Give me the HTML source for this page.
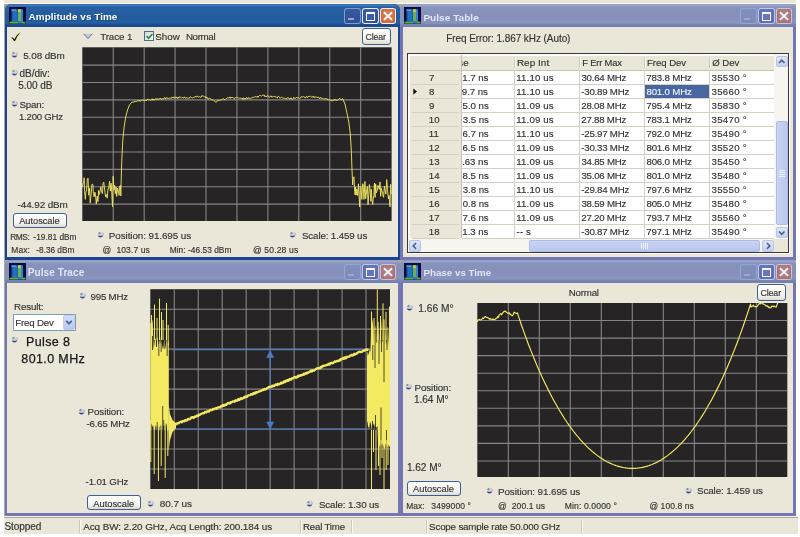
<!DOCTYPE html>
<html><head><meta charset="utf-8"><style>
html,body{margin:0;padding:0;width:800px;height:537px;overflow:hidden;background:#fff}
#w>div,#w>svg{position:absolute}
#w{position:absolute;left:0;top:0;width:800px;height:537px;filter:blur(0.4px)}
.t{white-space:pre;font-family:"Liberation Sans", sans-serif;-webkit-text-stroke:0.15px currentColor}
</style></head><body>
<div id="w">
<div style="left:0;top:0;width:800px;height:537px;background:#ffffff"></div>
<div style="left:3.5px;top:0px;width:792.5px;height:3px;background:#eae7d8"></div>
<div style="left:3.5px;top:3px;width:792.5px;height:1px;background:#fbfaf4"></div>
<div style="left:3.5px;top:3.5px;width:792.5px;height:513px;background:#a9a79c"></div>
<div style="left:4.5px;top:4px;width:395.5px;height:256px;background:#1b4592;border-radius:6px 6px 0 0"></div>
<div style="left:4.5px;top:4px;width:395.5px;height:22.5px;background:linear-gradient(#3268ae 0px,#4278bc 1.5px,#2862a6 3px,#225c9c 12px,#2460a2 19px,#1a4a8c 21px,#1a4a8c 22.5px);border-radius:6px 6px 0 0"></div>
<div style="left:7.0px;top:26.5px;width:390.5px;height:230.5px;background:#eae7d8"></div>
<svg style="left:8.5px;top:7px" width="17" height="17" viewBox="0 0 17 17">
<rect x="0" y="0" width="17" height="17" fill="#0c0c3a"/>
<rect x="2.5" y="2.3" width="11.5" height="13" fill="#1c5aa8"/>
<rect x="2.5" y="2.3" width="5" height="1.8" fill="#4a9ce0"/>
<rect x="4" y="4" width="4" height="10" fill="#2270bc"/>
<rect x="9" y="2.3" width="3" height="12" fill="#6cae5a"/>
<rect x="9.2" y="2.3" width="2.4" height="2.6" fill="#d8d848"/>
<rect x="12" y="2.3" width="2" height="13" fill="#2a84d0"/>
<rect x="0.5" y="14.6" width="8.7" height="2" fill="#5aaa48"/>
<rect x="12.3" y="14.6" width="4.2" height="2" fill="#5aaa48"/>
<rect x="9.2" y="14.6" width="3.1" height="2" fill="#2a84d0"/>
</svg>
<div class="t" style="left:28.60px;top:12.40px;font-size:9.93px;line-height:9.93px;letter-spacing:0.047px;color:#ffffff;font-weight:700;-webkit-text-stroke:0;text-shadow:1px 1px 0 rgba(10,20,80,0.35)">Amplitude vs Time</div>
<div style="left:344.25px;top:8.2px;width:16.5px;height:16.3px;background:linear-gradient(#36589e,#2d5096);border:1px solid rgba(200,210,240,0.55);box-sizing:border-box;border-radius:3px"></div>
<div style="left:348.25px;top:18.2px;width:5.8px;height:2px;background:#a49ec2"></div>
<div style="left:362.25px;top:8.2px;width:16.5px;height:16.3px;background:radial-gradient(ellipse at 50% 40%,#3c5eaa 40%,#284a96 100%);border:1.2px solid rgba(255,255,255,0.9);box-sizing:border-box;border-radius:3px"></div>
<div style="left:366.0px;top:12.0px;width:9px;height:9px;border:1.2px solid #ffffff;border-top-width:2.3px;box-sizing:border-box"></div>
<div style="left:380.25px;top:8.2px;width:16.2px;height:16.2px;background:radial-gradient(ellipse at 50% 45%,#dc7c52 30%,#c85e32 100%);border:1.2px solid rgba(255,255,255,0.9);box-sizing:border-box;border-radius:3px"></div>
<svg style="left:380.25px;top:8.2px" width="16.2" height="16.2"><path d="M3.9 4.2 L12.1 11.9 M12.1 4.2 L3.9 11.9" stroke="#ffffff" stroke-width="1.9"/></svg>
<div style="left:400px;top:4px;width:396px;height:256px;background:#7276b2;border-radius:6px 6px 0 0"></div>
<div style="left:400px;top:4px;width:396px;height:22.5px;background:linear-gradient(#8e9ac4 0px,#9aa6cc 1.5px,#8894bc 3px,#8490b9 12px,#8894bc 19px,#7480b0 21px,#7480b0 22.5px);border-radius:6px 6px 0 0"></div>
<div style="left:403px;top:26.5px;width:390px;height:230.5px;background:#eae7d8"></div>
<svg style="left:404px;top:7px" width="17" height="17" viewBox="0 0 17 17">
<rect x="0" y="0" width="17" height="17" fill="#0c0c3a"/>
<rect x="2.5" y="2.3" width="11.5" height="13" fill="#1c5aa8"/>
<rect x="2.5" y="2.3" width="5" height="1.8" fill="#4a9ce0"/>
<rect x="4" y="4" width="4" height="10" fill="#2270bc"/>
<rect x="9" y="2.3" width="3" height="12" fill="#6cae5a"/>
<rect x="9.2" y="2.3" width="2.4" height="2.6" fill="#d8d848"/>
<rect x="12" y="2.3" width="2" height="13" fill="#2a84d0"/>
<rect x="0.5" y="14.6" width="8.7" height="2" fill="#5aaa48"/>
<rect x="12.3" y="14.6" width="4.2" height="2" fill="#5aaa48"/>
<rect x="9.2" y="14.6" width="3.1" height="2" fill="#2a84d0"/>
</svg>
<div class="t" style="left:423.40px;top:12.50px;font-size:9.98px;line-height:9.98px;letter-spacing:0.064px;color:#dfe6fa;font-weight:700;-webkit-text-stroke:0;">Pulse Table</div>
<div style="left:740.25px;top:8.2px;width:16.5px;height:16.3px;background:linear-gradient(#8290bc,#7c8ab8);border:1px solid rgba(200,208,240,0.35);box-sizing:border-box;border-radius:3px"></div>
<div style="left:744.25px;top:18.2px;width:5.8px;height:2px;background:#9ca6d0"></div>
<div style="left:758.25px;top:8.2px;width:16.5px;height:16.3px;background:radial-gradient(ellipse at 50% 40%,#6676b8 40%,#5666aa 100%);border:1.2px solid rgba(225,230,250,0.75);box-sizing:border-box;border-radius:3px"></div>
<div style="left:762.0px;top:12.0px;width:9px;height:9px;border:1.2px solid #f2f4ff;border-top-width:2.3px;box-sizing:border-box"></div>
<div style="left:776.25px;top:8.2px;width:16.2px;height:16.2px;background:radial-gradient(ellipse at 50% 45%,#b48084 30%,#a06c72 100%);border:1.2px solid rgba(225,230,250,0.7);box-sizing:border-box;border-radius:3px"></div>
<svg style="left:776.25px;top:8.2px" width="16.2" height="16.2"><path d="M3.9 4.2 L12.1 11.9 M12.1 4.2 L3.9 11.9" stroke="#f2f4ff" stroke-width="1.9"/></svg>
<div style="left:4.5px;top:260px;width:395.5px;height:256px;background:#7276b2;border-radius:6px 6px 0 0"></div>
<div style="left:4.5px;top:260px;width:395.5px;height:22.5px;background:linear-gradient(#8e9ac4 0px,#9aa6cc 1.5px,#8894bc 3px,#8490b9 12px,#8894bc 19px,#7480b0 21px,#7480b0 22.5px);border-radius:6px 6px 0 0"></div>
<div style="left:7.0px;top:282.5px;width:390.5px;height:230.0px;background:#eae7d8"></div>
<svg style="left:8.5px;top:263px" width="17" height="17" viewBox="0 0 17 17">
<rect x="0" y="0" width="17" height="17" fill="#0c0c3a"/>
<rect x="2.5" y="2.3" width="11.5" height="13" fill="#1c5aa8"/>
<rect x="2.5" y="2.3" width="5" height="1.8" fill="#4a9ce0"/>
<rect x="4" y="4" width="4" height="10" fill="#2270bc"/>
<rect x="9" y="2.3" width="3" height="12" fill="#6cae5a"/>
<rect x="9.2" y="2.3" width="2.4" height="2.6" fill="#d8d848"/>
<rect x="12" y="2.3" width="2" height="13" fill="#2a84d0"/>
<rect x="0.5" y="14.6" width="8.7" height="2" fill="#5aaa48"/>
<rect x="12.3" y="14.6" width="4.2" height="2" fill="#5aaa48"/>
<rect x="9.2" y="14.6" width="3.1" height="2" fill="#2a84d0"/>
</svg>
<div class="t" style="left:27.80px;top:267.70px;font-size:10.01px;line-height:10.01px;letter-spacing:0.082px;color:#dfe6fa;font-weight:700;-webkit-text-stroke:0;">Pulse Trace</div>
<div style="left:344.25px;top:264.2px;width:16.5px;height:16.3px;background:linear-gradient(#8290bc,#7c8ab8);border:1px solid rgba(200,208,240,0.35);box-sizing:border-box;border-radius:3px"></div>
<div style="left:348.25px;top:274.2px;width:5.8px;height:2px;background:#9ca6d0"></div>
<div style="left:362.25px;top:264.2px;width:16.5px;height:16.3px;background:radial-gradient(ellipse at 50% 40%,#6676b8 40%,#5666aa 100%);border:1.2px solid rgba(225,230,250,0.75);box-sizing:border-box;border-radius:3px"></div>
<div style="left:366.0px;top:268.0px;width:9px;height:9px;border:1.2px solid #f2f4ff;border-top-width:2.3px;box-sizing:border-box"></div>
<div style="left:380.25px;top:264.2px;width:16.2px;height:16.2px;background:radial-gradient(ellipse at 50% 45%,#b48084 30%,#a06c72 100%);border:1.2px solid rgba(225,230,250,0.7);box-sizing:border-box;border-radius:3px"></div>
<svg style="left:380.25px;top:264.2px" width="16.2" height="16.2"><path d="M3.9 4.2 L12.1 11.9 M12.1 4.2 L3.9 11.9" stroke="#f2f4ff" stroke-width="1.9"/></svg>
<div style="left:400px;top:260px;width:396px;height:256px;background:#7276b2;border-radius:6px 6px 0 0"></div>
<div style="left:400px;top:260px;width:396px;height:22.5px;background:linear-gradient(#8e9ac4 0px,#9aa6cc 1.5px,#8894bc 3px,#8490b9 12px,#8894bc 19px,#7480b0 21px,#7480b0 22.5px);border-radius:6px 6px 0 0"></div>
<div style="left:403px;top:282.5px;width:390px;height:230.0px;background:#eae7d8"></div>
<svg style="left:404px;top:263px" width="17" height="17" viewBox="0 0 17 17">
<rect x="0" y="0" width="17" height="17" fill="#0c0c3a"/>
<rect x="2.5" y="2.3" width="11.5" height="13" fill="#1c5aa8"/>
<rect x="2.5" y="2.3" width="5" height="1.8" fill="#4a9ce0"/>
<rect x="4" y="4" width="4" height="10" fill="#2270bc"/>
<rect x="9" y="2.3" width="3" height="12" fill="#6cae5a"/>
<rect x="9.2" y="2.3" width="2.4" height="2.6" fill="#d8d848"/>
<rect x="12" y="2.3" width="2" height="13" fill="#2a84d0"/>
<rect x="0.5" y="14.6" width="8.7" height="2" fill="#5aaa48"/>
<rect x="12.3" y="14.6" width="4.2" height="2" fill="#5aaa48"/>
<rect x="9.2" y="14.6" width="3.1" height="2" fill="#2a84d0"/>
</svg>
<div class="t" style="left:423.41px;top:268.00px;font-size:9.79px;line-height:9.79px;color:#dfe6fa;font-weight:700;-webkit-text-stroke:0;">Phase vs Time</div>
<div style="left:740.25px;top:264.2px;width:16.5px;height:16.3px;background:linear-gradient(#8290bc,#7c8ab8);border:1px solid rgba(200,208,240,0.35);box-sizing:border-box;border-radius:3px"></div>
<div style="left:744.25px;top:274.2px;width:5.8px;height:2px;background:#9ca6d0"></div>
<div style="left:758.25px;top:264.2px;width:16.5px;height:16.3px;background:radial-gradient(ellipse at 50% 40%,#6676b8 40%,#5666aa 100%);border:1.2px solid rgba(225,230,250,0.75);box-sizing:border-box;border-radius:3px"></div>
<div style="left:762.0px;top:268.0px;width:9px;height:9px;border:1.2px solid #f2f4ff;border-top-width:2.3px;box-sizing:border-box"></div>
<div style="left:776.25px;top:264.2px;width:16.2px;height:16.2px;background:radial-gradient(ellipse at 50% 45%,#b48084 30%,#a06c72 100%);border:1.2px solid rgba(225,230,250,0.7);box-sizing:border-box;border-radius:3px"></div>
<svg style="left:776.25px;top:264.2px" width="16.2" height="16.2"><path d="M3.9 4.2 L12.1 11.9 M12.1 4.2 L3.9 11.9" stroke="#f2f4ff" stroke-width="1.9"/></svg>
<svg style="left:10px;top:31px" width="13" height="12"><path d="M1.3 6.4 Q2.6 5.6 4.3 8.2 Q6.6 3.2 10.6 0.9 Q7.6 3.8 5.0 9.9 L4.0 10.0 Q2.8 7.6 1.3 6.4Z" fill="#e8dc30" transform="translate(0.7,0.4)"/><path d="M1.3 6.4 Q2.6 5.6 4.3 8.2 Q6.6 3.2 10.6 0.9 Q7.6 3.8 5.0 9.9 L4.0 10.0 Q2.8 7.6 1.3 6.4Z" fill="#161616"/></svg>
<svg style="left:10.90px;top:51.10px" width="7" height="7" viewBox="0 0 7 7"><circle cx="3.5" cy="3.5" r="2.9" fill="#d6d6e6"/><path d="M0.75 4.4 Q3.5 5.0 6.25 4.4 A2.9 2.9 0 0 1 0.75 4.4Z" fill="#4c3e94"/><path d="M5.6 1.6 A2.9 2.9 0 0 1 6.2 4.3" stroke="#9a9ab4" stroke-width="0.7" fill="none"/><circle cx="2.5" cy="2.3" r="1.05" fill="#3a8a44"/><circle cx="2.9" cy="2.6" r="0.55" fill="#c8d040"/></svg>
<div class="t" style="left:23.20px;top:50.70px;font-size:9.92px;line-height:9.92px;letter-spacing:-0.105px;color:#333333;font-weight:400;">5.08 dBm</div>
<svg style="left:10.90px;top:69.20px" width="7" height="7" viewBox="0 0 7 7"><circle cx="3.5" cy="3.5" r="2.9" fill="#d6d6e6"/><path d="M0.75 4.4 Q3.5 5.0 6.25 4.4 A2.9 2.9 0 0 1 0.75 4.4Z" fill="#4c3e94"/><path d="M5.6 1.6 A2.9 2.9 0 0 1 6.2 4.3" stroke="#9a9ab4" stroke-width="0.7" fill="none"/><circle cx="2.5" cy="2.3" r="1.05" fill="#3a8a44"/><circle cx="2.9" cy="2.6" r="0.55" fill="#c8d040"/></svg>
<div class="t" style="left:19.50px;top:69.00px;font-size:10.04px;line-height:10.04px;letter-spacing:-0.052px;color:#333333;font-weight:400;">dB/div:</div>
<div class="t" style="left:18.30px;top:81.40px;font-size:10.02px;line-height:10.02px;letter-spacing:-0.062px;color:#333333;font-weight:400;">5.00 dB</div>
<svg style="left:10.90px;top:100.40px" width="7" height="7" viewBox="0 0 7 7"><circle cx="3.5" cy="3.5" r="2.9" fill="#d6d6e6"/><path d="M0.75 4.4 Q3.5 5.0 6.25 4.4 A2.9 2.9 0 0 1 0.75 4.4Z" fill="#4c3e94"/><path d="M5.6 1.6 A2.9 2.9 0 0 1 6.2 4.3" stroke="#9a9ab4" stroke-width="0.7" fill="none"/><circle cx="2.5" cy="2.3" r="1.05" fill="#3a8a44"/><circle cx="2.9" cy="2.6" r="0.55" fill="#c8d040"/></svg>
<div class="t" style="left:19.51px;top:100.30px;font-size:9.77px;line-height:9.77px;letter-spacing:-0.171px;color:#333333;font-weight:400;">Span:</div>
<div class="t" style="left:18.93px;top:112.30px;font-size:9.62px;line-height:9.62px;letter-spacing:-0.216px;color:#333333;font-weight:400;">1.200 GHz</div>
<div class="t" style="left:17.60px;top:199.70px;font-size:9.92px;line-height:9.92px;letter-spacing:-0.107px;color:#333333;font-weight:400;">-44.92 dBm</div>
<div style="left:13px;top:212.8px;width:54px;height:15px;border:1px solid #3c5f94;border-radius:3px;box-sizing:border-box;background:linear-gradient(#ffffff,#f4f3ee 70%,#dcdad0)"></div>
<div class="t" style="left:19.20px;top:216.90px;font-size:9.26px;line-height:9.26px;letter-spacing:-0.016px;color:#333333;font-weight:400;">Autoscale</div>
<div class="t" style="left:10.13px;top:232.80px;font-size:8.40px;line-height:8.40px;letter-spacing:-0.397px;color:#333333;font-weight:400;">RMS:</div>
<div class="t" style="left:33.37px;top:232.80px;font-size:8.34px;line-height:8.34px;letter-spacing:0.016px;color:#333333;font-weight:400;">-19.81 dBm</div>
<div class="t" style="left:11.32px;top:246.30px;font-size:8.48px;line-height:8.48px;letter-spacing:0.082px;color:#333333;font-weight:400;">Max:</div>
<div class="t" style="left:36.37px;top:247.30px;font-size:8.26px;line-height:8.26px;letter-spacing:-0.019px;color:#333333;font-weight:400;">-8.36 dBm</div>
<svg style="left:83px;top:33px" width="10" height="7"><path d="M0.6 0.8 L9.2 0.8 L5 5.6Z" fill="#c4c8de"/><path d="M0.6 0.8 L5 5.6 L9.2 0.8" stroke="#6e74ac" stroke-width="1" fill="none"/></svg>
<div class="t" style="left:100.20px;top:32.20px;font-size:9.80px;line-height:9.80px;letter-spacing:-0.102px;color:#333333;font-weight:400;">Trace 1</div>
<div style="left:144px;top:30.5px;width:10.3px;height:10.3px;border:1px solid #4a6a98;box-sizing:border-box;background:linear-gradient(135deg,#dcdcd4,#f8f8f4)"></div>
<svg style="left:145px;top:32px" width="9" height="9"><path d="M1.6 4.0 L3.6 6.2 L7.4 2.0" stroke="#2a8c3a" stroke-width="1.7" fill="none"/></svg>
<div class="t" style="left:155.21px;top:32.20px;font-size:9.80px;line-height:9.80px;letter-spacing:0.067px;color:#333333;font-weight:400;">Show</div>
<div class="t" style="left:185.92px;top:32.20px;font-size:9.80px;line-height:9.80px;letter-spacing:-0.378px;color:#333333;font-weight:400;">Normal</div>
<div style="left:361.75px;top:28.4px;width:29.25px;height:16.5px;border:1px solid #3c5f94;border-radius:3px;box-sizing:border-box;background:linear-gradient(#ffffff,#f4f3ee 70%,#dcdad0)"></div>
<div class="t" style="left:365.46px;top:33.40px;font-size:8.84px;line-height:8.84px;letter-spacing:-0.167px;color:#333333;font-weight:400;">Clear</div>
<svg style="left:82px;top:47px" width="310" height="174" viewBox="0 0 310 174"><rect x="0.30" y="0.30" width="309.30" height="173.70" fill="#272425"/><path d="M31.23 0.30V174.00 M0.30 18.17H309.60 M62.16 0.30V174.00 M0.30 35.54H309.60 M93.09 0.30V174.00 M0.30 52.91H309.60 M124.02 0.30V174.00 M0.30 70.28H309.60 M154.95 0.30V174.00 M0.30 87.65H309.60 M185.88 0.30V174.00 M0.30 105.02H309.60 M216.81 0.30V174.00 M0.30 122.39H309.60 M247.74 0.30V174.00 M0.30 139.76H309.60 M278.67 0.30V174.00 M0.30 157.13H309.60" stroke="#858585" stroke-width="1.1" fill="none"/><path d="M0.30 140.51 L1.08 136.23 L1.71 135.99 L2.15 130.78 L2.60 144.61 L3.38 152.38 L3.92 144.46 L4.58 144.19 L5.31 132.15 L6.04 131.20 L6.75 148.21 L7.69 141.15 L8.21 156.02 L9.12 147.40 L10.09 137.01 L10.93 137.58 L11.38 146.36 L12.12 149.88 L12.93 145.10 L13.60 149.28 L14.29 156.95 L15.26 148.97 L15.90 154.72 L16.66 143.39 L17.24 147.55 L18.18 143.44 L18.82 139.72 L19.48 144.35 L20.45 146.61 L21.00 136.41 L21.79 135.21 L22.31 139.79 L23.03 145.37 L23.52 149.61 L24.31 147.58 L25.22 151.18 L25.95 141.77 L26.64 141.81 L27.61 134.22 L28.35 144.12 L29.11 136.20 L29.74 145.78 L30.50 159.60 L31.18 129.26 L32.02 143.14 L32.73 138.49 L33.35 146.73 L34.19 140.07 L34.66 149.37 L35.59 141.05 L36.32 143.55 L37.08 148.40 L37.61 139.07 L38.48 138.40 L38.80 149.00 L39.20 133.00 L39.80 113.00 L40.80 93.00 L42.00 81.00 L43.50 71.00 L45.50 63.00 L47.50 58.00 L49.50 55.50 L53.00 54.50 L58.00 53.50 L58.00 54.38 L58.71 53.99 L59.43 53.39 L60.14 52.86 L60.86 53.57 L61.57 53.08 L62.29 53.88 L63.00 53.70 L63.71 52.96 L64.43 54.01 L65.14 52.33 L65.86 52.30 L66.57 52.89 L67.29 52.58 L68.00 52.77 L68.71 53.60 L69.43 52.86 L70.14 51.69 L70.86 53.25 L71.57 52.16 L72.29 52.63 L73.00 52.90 L73.71 51.54 L74.43 51.96 L75.14 52.47 L75.86 51.47 L76.57 52.64 L77.29 51.75 L78.00 52.04 L78.70 51.00 L79.39 52.49 L80.09 52.03 L80.78 51.51 L81.48 51.95 L82.17 50.71 L82.87 50.79 L83.56 52.23 L84.26 50.44 L84.95 51.39 L85.65 51.11 L86.34 51.39 L87.04 51.26 L87.73 51.17 L88.43 50.90 L89.12 51.67 L89.82 50.21 L90.51 50.86 L91.21 49.85 L91.90 51.20 L92.60 51.01 L93.30 49.88 L94.00 51.05 L94.70 49.95 L95.40 51.48 L96.10 50.05 L96.80 51.27 L97.50 49.75 L98.20 50.08 L98.90 50.60 L99.60 51.07 L100.30 50.29 L101.00 50.68 L101.70 51.20 L102.40 49.81 L103.10 51.03 L103.80 51.32 L104.50 50.89 L105.20 51.17 L105.90 50.63 L106.60 51.19 L107.30 51.28 L108.00 49.94 L108.69 49.91 L109.38 50.50 L110.07 51.09 L110.76 50.85 L111.44 50.49 L112.13 50.73 L112.82 49.54 L113.51 49.47 L114.20 50.26 L114.89 49.31 L115.58 49.14 L116.27 50.19 L116.96 49.86 L117.64 49.71 L118.33 50.18 L119.02 50.31 L119.71 48.76 L120.40 48.94 L121.13 48.90 L121.87 49.22 L122.60 50.08 L123.33 49.54 L124.07 51.32 L124.80 50.05 L125.53 50.74 L126.27 52.13 L127.00 51.69 L127.70 51.24 L128.40 51.66 L129.10 52.35 L129.80 53.17 L130.50 52.91 L131.20 52.73 L131.90 53.50 L132.60 54.42 L133.30 54.79 L134.00 55.06 L134.70 54.83 L135.40 53.40 L136.10 53.67 L136.80 53.43 L137.50 53.21 L138.20 52.89 L138.90 53.35 L139.60 52.73 L140.30 52.16 L141.00 52.15 L141.70 51.63 L142.40 52.62 L143.10 52.72 L143.80 52.00 L144.50 51.31 L145.20 50.92 L145.90 50.52 L146.60 50.92 L147.30 51.23 L148.00 49.87 L148.71 51.34 L149.43 50.09 L150.14 51.04 L150.86 50.29 L151.57 51.21 L152.29 51.78 L153.00 50.76 L153.71 50.84 L154.43 50.77 L155.14 50.34 L155.86 50.88 L156.57 50.88 L157.29 51.14 L158.00 51.63 L158.71 51.11 L159.43 51.39 L160.14 51.04 L160.86 52.29 L161.57 50.81 L162.29 52.31 L163.00 51.11 L163.69 52.17 L164.38 50.64 L165.07 50.87 L165.75 51.90 L166.44 50.49 L167.13 51.41 L167.82 51.42 L168.51 51.37 L169.20 50.95 L169.88 51.33 L170.57 50.25 L171.26 50.37 L171.95 50.23 L172.64 50.08 L173.33 49.67 L174.02 49.48 L174.70 50.31 L175.39 49.09 L176.08 50.27 L176.77 49.03 L177.46 48.47 L178.15 48.49 L178.83 48.69 L179.52 49.21 L180.21 48.41 L180.90 48.38 L181.59 48.17 L182.28 48.03 L182.97 49.86 L183.66 48.87 L184.34 49.83 L185.03 49.35 L185.72 48.37 L186.41 49.62 L187.10 50.09 L187.79 50.20 L188.48 48.98 L189.17 48.89 L189.86 50.30 L190.54 49.81 L191.23 49.69 L191.92 49.16 L192.61 49.65 L193.30 50.11 L193.99 49.48 L194.67 50.53 L195.36 50.96 L196.04 49.33 L196.73 49.38 L197.41 50.35 L198.10 51.29 L198.78 50.55 L199.47 50.15 L200.15 50.60 L200.83 51.07 L201.52 51.15 L202.20 51.25 L202.89 51.14 L203.57 51.85 L204.26 52.09 L204.94 50.98 L205.63 50.91 L206.31 51.02 L207.00 51.06 L207.69 52.22 L208.38 51.89 L209.06 50.76 L209.75 52.23 L210.44 52.15 L211.12 51.83 L211.81 50.29 L212.50 51.33 L213.19 51.72 L213.88 50.85 L214.56 50.11 L215.25 51.15 L215.94 50.57 L216.62 50.74 L217.31 51.51 L218.00 50.78 L218.68 50.90 L219.36 49.69 L220.05 49.89 L220.73 50.00 L221.41 49.47 L222.09 50.07 L222.78 49.96 L223.46 51.10 L224.14 49.86 L224.82 49.29 L225.51 50.77 L226.19 49.53 L226.87 49.42 L227.55 49.64 L228.24 49.15 L228.92 49.45 L229.60 50.08 L230.29 49.43 L230.99 50.46 L231.68 49.30 L232.37 50.69 L233.07 49.56 L233.76 50.44 L234.45 50.17 L235.15 50.08 L235.84 50.75 L236.53 49.85 L237.23 51.50 L237.92 51.40 L238.61 50.22 L239.31 51.63 L240.00 51.51 L240.71 51.34 L241.41 51.80 L242.12 51.89 L242.83 51.65 L243.54 51.43 L244.24 52.20 L244.95 51.51 L245.66 52.90 L246.36 52.87 L247.07 52.67 L247.78 52.68 L248.49 53.33 L249.19 53.15 L249.90 54.04 L250.62 53.66 L251.34 53.24 L252.06 53.58 L252.78 52.06 L253.50 53.17 L254.22 53.28 L254.94 53.03 L255.66 53.37 L256.38 52.72 L257.10 51.62 L257.82 51.45 L258.54 52.43 L259.26 52.91 L259.98 51.77 L260.70 51.90 L263.00 57.00 L264.80 65.40 L266.80 75.00 L268.30 87.00 L269.30 103.00 L270.00 123.00 L270.70 138.00 L271.20 130.71 L272.00 129.78 L272.70 144.60 L273.16 148.03 L273.62 140.01 L274.16 148.08 L274.85 142.00 L275.66 148.54 L276.44 136.82 L277.00 148.13 L277.74 159.94 L278.21 139.20 L279.03 140.35 L279.88 152.39 L280.47 136.96 L281.06 136.80 L282.03 152.40 L282.97 134.42 L283.68 151.70 L284.56 144.15 L285.37 139.43 L286.06 157.71 L286.71 147.86 L287.34 137.56 L287.94 141.25 L288.89 154.44 L289.35 142.13 L289.81 151.23 L290.71 157.36 L291.21 152.01 L291.81 148.64 L292.47 135.99 L293.11 150.39 L293.65 136.87 L294.30 145.95 L295.20 143.75 L295.93 138.40 L296.51 139.85 L297.29 142.41 L297.98 134.92 L298.68 149.30 L299.36 141.16 L300.02 144.81 L300.54 144.95 L301.16 149.26 L301.59 150.30 L302.43 139.07 L303.27 143.97 L303.89 147.17 L304.76 132.56 L305.54 142.84 L306.41 151.96 L307.07 148.48 L308.03 159.94 L308.59 137.35 L309.31 147.10" stroke="#f4ea62" stroke-width="0.9" fill="none" stroke-linejoin="round" /></svg>
<svg style="left:97.00px;top:231.00px" width="7" height="7" viewBox="0 0 7 7"><circle cx="3.5" cy="3.5" r="2.9" fill="#d6d6e6"/><path d="M0.75 4.4 Q3.5 5.0 6.25 4.4 A2.9 2.9 0 0 1 0.75 4.4Z" fill="#4c3e94"/><path d="M5.6 1.6 A2.9 2.9 0 0 1 6.2 4.3" stroke="#9a9ab4" stroke-width="0.7" fill="none"/><circle cx="2.5" cy="2.3" r="1.05" fill="#3a8a44"/><circle cx="2.9" cy="2.6" r="0.55" fill="#c8d040"/></svg>
<div class="t" style="left:108.81px;top:230.60px;font-size:9.89px;line-height:9.89px;letter-spacing:-0.091px;color:#333333;font-weight:400;">Position: 91.695 us</div>
<svg style="left:289.40px;top:231.00px" width="7" height="7" viewBox="0 0 7 7"><circle cx="3.5" cy="3.5" r="2.9" fill="#d6d6e6"/><path d="M0.75 4.4 Q3.5 5.0 6.25 4.4 A2.9 2.9 0 0 1 0.75 4.4Z" fill="#4c3e94"/><path d="M5.6 1.6 A2.9 2.9 0 0 1 6.2 4.3" stroke="#9a9ab4" stroke-width="0.7" fill="none"/><circle cx="2.5" cy="2.3" r="1.05" fill="#3a8a44"/><circle cx="2.9" cy="2.6" r="0.55" fill="#c8d040"/></svg>
<div class="t" style="left:302.01px;top:230.60px;font-size:9.75px;line-height:9.75px;letter-spacing:-0.138px;color:#333333;font-weight:400;">Scale: 1.459 us</div>
<div class="t" style="left:102.40px;top:246.00px;font-size:8.60px;line-height:8.60px;color:#333333;font-weight:400;">@</div>
<div class="t" style="left:116.40px;top:246.00px;font-size:8.55px;line-height:8.55px;letter-spacing:0.093px;color:#333333;font-weight:400;">103.7 us</div>
<div class="t" style="left:169.73px;top:246.00px;font-size:8.37px;line-height:8.37px;letter-spacing:0.028px;color:#333333;font-weight:400;">Min: -46.53 dBm</div>
<div class="t" style="left:253.00px;top:246.00px;font-size:8.61px;line-height:8.61px;letter-spacing:0.122px;color:#333333;font-weight:400;">@ 50.28 us</div>
<div class="t" style="left:446.20px;top:34.00px;font-size:9.99px;line-height:9.99px;letter-spacing:-0.063px;color:#333333;font-weight:400;">Freq Error: 1.867 kHz (Auto)</div>
<div style="left:407px;top:53px;width:382px;height:200px;background:#ffffff;border:1.5px solid #383838;box-sizing:border-box;box-shadow:1px 1px 0 #ffffff"></div>
<div style="left:408.5px;top:54.5px;width:365.5px;height:15.5px;background:#eae7d8"></div>
<div style="left:408.5px;top:54.5px;width:365.5px;height:1px;background:#fbfaf4"></div>
<div style="left:408.5px;top:69.5px;width:365.5px;height:1px;background:#c8c4b2"></div>
<div style="left:408.5px;top:70.5px;width:53.5px;height:167.5px;background:#eae7d8"></div>
<div style="left:408.5px;top:54.5px;width:1px;height:183.5px;background:#fbfaf4"></div>
<div class="t" style="left:458.31px;top:57.70px;font-size:9.70px;line-height:9.70px;color:#333333;font-weight:400;">se</div>
<div style="left:450px;top:56px;width:11.3px;height:13px;background:#eae7d8"></div>
<div style="left:460.8px;top:54.5px;width:1.5px;height:183.5px;background:#c4c0b0"></div>
<div style="left:514px;top:70px;width:1px;height:168px;background:#d4d0c4"></div>
<div style="left:513.5px;top:56.5px;width:1px;height:11.5px;background:#d0ccbc"></div>
<div style="left:514.5px;top:56.5px;width:1px;height:11.5px;background:#fbfaf4"></div>
<div style="left:579px;top:70px;width:1px;height:168px;background:#d4d0c4"></div>
<div style="left:578.5px;top:56.5px;width:1px;height:11.5px;background:#d0ccbc"></div>
<div style="left:579.5px;top:56.5px;width:1px;height:11.5px;background:#fbfaf4"></div>
<div style="left:644px;top:70px;width:1px;height:168px;background:#d4d0c4"></div>
<div style="left:643.5px;top:56.5px;width:1px;height:11.5px;background:#d0ccbc"></div>
<div style="left:644.5px;top:56.5px;width:1px;height:11.5px;background:#fbfaf4"></div>
<div style="left:709px;top:70px;width:1px;height:168px;background:#d4d0c4"></div>
<div style="left:708.5px;top:56.5px;width:1px;height:11.5px;background:#d0ccbc"></div>
<div style="left:709.5px;top:56.5px;width:1px;height:11.5px;background:#fbfaf4"></div>
<div style="left:462px;top:83.5px;width:312px;height:1px;background:#d4d0c4"></div>
<div style="left:412px;top:83.5px;width:46.5px;height:1px;background:#d4d0c2"></div>
<div style="left:462px;top:97.5px;width:312px;height:1px;background:#d4d0c4"></div>
<div style="left:412px;top:97.5px;width:46.5px;height:1px;background:#d4d0c2"></div>
<div style="left:462px;top:111.5px;width:312px;height:1px;background:#d4d0c4"></div>
<div style="left:412px;top:111.5px;width:46.5px;height:1px;background:#d4d0c2"></div>
<div style="left:462px;top:125.5px;width:312px;height:1px;background:#d4d0c4"></div>
<div style="left:412px;top:125.5px;width:46.5px;height:1px;background:#d4d0c2"></div>
<div style="left:462px;top:139.5px;width:312px;height:1px;background:#d4d0c4"></div>
<div style="left:412px;top:139.5px;width:46.5px;height:1px;background:#d4d0c2"></div>
<div style="left:462px;top:153.5px;width:312px;height:1px;background:#d4d0c4"></div>
<div style="left:412px;top:153.5px;width:46.5px;height:1px;background:#d4d0c2"></div>
<div style="left:462px;top:167.5px;width:312px;height:1px;background:#d4d0c4"></div>
<div style="left:412px;top:167.5px;width:46.5px;height:1px;background:#d4d0c2"></div>
<div style="left:462px;top:181.5px;width:312px;height:1px;background:#d4d0c4"></div>
<div style="left:412px;top:181.5px;width:46.5px;height:1px;background:#d4d0c2"></div>
<div style="left:462px;top:195.5px;width:312px;height:1px;background:#d4d0c4"></div>
<div style="left:412px;top:195.5px;width:46.5px;height:1px;background:#d4d0c2"></div>
<div style="left:462px;top:209.5px;width:312px;height:1px;background:#d4d0c4"></div>
<div style="left:412px;top:209.5px;width:46.5px;height:1px;background:#d4d0c2"></div>
<div style="left:462px;top:223.5px;width:312px;height:1px;background:#d4d0c4"></div>
<div style="left:412px;top:223.5px;width:46.5px;height:1px;background:#d4d0c2"></div>
<div style="left:462px;top:237.5px;width:312px;height:1px;background:#d4d0c4"></div>
<div style="left:412px;top:237.5px;width:46.5px;height:1px;background:#d4d0c2"></div>
<div style="left:644.5px;top:84.5px;width:64.5px;height:13.5px;background:#4866a0"></div>
<div class="t" style="left:516.91px;top:57.70px;font-size:9.89px;line-height:9.89px;letter-spacing:0.064px;color:#333333;font-weight:400;">Rep Int</div>
<div class="t" style="left:582.15px;top:58.70px;font-size:9.32px;line-height:9.32px;letter-spacing:-0.133px;color:#333333;font-weight:400;">F Err Max</div>
<div class="t" style="left:646.93px;top:57.70px;font-size:9.61px;line-height:9.61px;letter-spacing:-0.036px;color:#333333;font-weight:400;">Freq Dev</div>
<div class="t" style="left:712.31px;top:57.70px;font-size:9.61px;line-height:9.61px;letter-spacing:-0.037px;color:#333333;font-weight:400;">Ø Dev</div>
<div class="t" style="left:429.01px;top:73.00px;font-size:9.70px;line-height:9.70px;color:#333333;font-weight:400;">7</div>
<div class="t" style="left:462.32px;top:73.00px;font-size:9.70px;line-height:9.70px;letter-spacing:-0.051px;color:#333333;font-weight:400;">1.7 ns</div>
<div class="t" style="left:516.32px;top:73.00px;font-size:9.70px;line-height:9.70px;letter-spacing:0.111px;color:#333333;font-weight:400;">11.10 us</div>
<div class="t" style="left:581.41px;top:73.00px;font-size:9.70px;line-height:9.70px;letter-spacing:-0.228px;color:#333333;font-weight:400;">30.64 MHz</div>
<div class="t" style="left:646.31px;top:73.00px;font-size:9.70px;line-height:9.70px;letter-spacing:-0.166px;color:#333333;font-weight:400;">783.8 MHz</div>
<div class="t" style="left:711.51px;top:73.00px;font-size:9.70px;line-height:9.70px;letter-spacing:0.271px;color:#333333;font-weight:400;">35530 °</div>
<div class="t" style="left:429.11px;top:86.97px;font-size:9.70px;line-height:9.70px;color:#333333;font-weight:400;">8</div>
<div class="t" style="left:461.81px;top:86.97px;font-size:9.70px;line-height:9.70px;letter-spacing:-0.051px;color:#333333;font-weight:400;">9.7 ns</div>
<div class="t" style="left:516.32px;top:86.97px;font-size:9.70px;line-height:9.70px;letter-spacing:0.111px;color:#333333;font-weight:400;">11.10 us</div>
<div class="t" style="left:581.31px;top:86.97px;font-size:9.70px;line-height:9.70px;letter-spacing:-0.228px;color:#333333;font-weight:400;">-30.89 MHz</div>
<div class="t" style="left:646.41px;top:86.97px;font-size:9.70px;line-height:9.70px;letter-spacing:-0.166px;color:#f0f4ff;font-weight:400;">801.0 MHz</div>
<div class="t" style="left:711.51px;top:86.97px;font-size:9.70px;line-height:9.70px;letter-spacing:0.271px;color:#333333;font-weight:400;">35660 °</div>
<div class="t" style="left:429.11px;top:100.94px;font-size:9.70px;line-height:9.70px;color:#333333;font-weight:400;">9</div>
<div class="t" style="left:462.61px;top:100.94px;font-size:9.70px;line-height:9.70px;letter-spacing:-0.051px;color:#333333;font-weight:400;">5.0 ns</div>
<div class="t" style="left:516.32px;top:100.94px;font-size:9.70px;line-height:9.70px;letter-spacing:0.111px;color:#333333;font-weight:400;">11.09 us</div>
<div class="t" style="left:581.22px;top:100.94px;font-size:9.70px;line-height:9.70px;letter-spacing:-0.228px;color:#333333;font-weight:400;">28.08 MHz</div>
<div class="t" style="left:646.31px;top:100.94px;font-size:9.70px;line-height:9.70px;letter-spacing:-0.166px;color:#333333;font-weight:400;">795.4 MHz</div>
<div class="t" style="left:711.51px;top:100.94px;font-size:9.70px;line-height:9.70px;letter-spacing:0.271px;color:#333333;font-weight:400;">35830 °</div>
<div class="t" style="left:428.82px;top:114.91px;font-size:9.70px;line-height:9.70px;color:#333333;font-weight:400;">10</div>
<div class="t" style="left:462.71px;top:114.91px;font-size:9.70px;line-height:9.70px;letter-spacing:-0.051px;color:#333333;font-weight:400;">3.5 ns</div>
<div class="t" style="left:516.32px;top:114.91px;font-size:9.70px;line-height:9.70px;letter-spacing:0.111px;color:#333333;font-weight:400;">11.09 us</div>
<div class="t" style="left:581.22px;top:114.91px;font-size:9.70px;line-height:9.70px;letter-spacing:-0.228px;color:#333333;font-weight:400;">27.88 MHz</div>
<div class="t" style="left:646.31px;top:114.91px;font-size:9.70px;line-height:9.70px;letter-spacing:-0.166px;color:#333333;font-weight:400;">783.1 MHz</div>
<div class="t" style="left:711.51px;top:114.91px;font-size:9.70px;line-height:9.70px;letter-spacing:0.271px;color:#333333;font-weight:400;">35470 °</div>
<div class="t" style="left:428.82px;top:128.88px;font-size:9.70px;line-height:9.70px;color:#333333;font-weight:400;">11</div>
<div class="t" style="left:462.51px;top:128.88px;font-size:9.70px;line-height:9.70px;letter-spacing:-0.051px;color:#333333;font-weight:400;">6.7 ns</div>
<div class="t" style="left:516.32px;top:128.88px;font-size:9.70px;line-height:9.70px;letter-spacing:0.111px;color:#333333;font-weight:400;">11.10 us</div>
<div class="t" style="left:581.31px;top:128.88px;font-size:9.70px;line-height:9.70px;letter-spacing:-0.228px;color:#333333;font-weight:400;">-25.97 MHz</div>
<div class="t" style="left:646.31px;top:128.88px;font-size:9.70px;line-height:9.70px;letter-spacing:-0.166px;color:#333333;font-weight:400;">792.0 MHz</div>
<div class="t" style="left:711.51px;top:128.88px;font-size:9.70px;line-height:9.70px;letter-spacing:0.271px;color:#333333;font-weight:400;">35490 °</div>
<div class="t" style="left:428.82px;top:142.85px;font-size:9.70px;line-height:9.70px;color:#333333;font-weight:400;">12</div>
<div class="t" style="left:462.51px;top:142.85px;font-size:9.70px;line-height:9.70px;letter-spacing:-0.051px;color:#333333;font-weight:400;">6.5 ns</div>
<div class="t" style="left:516.32px;top:142.85px;font-size:9.70px;line-height:9.70px;letter-spacing:0.111px;color:#333333;font-weight:400;">11.09 us</div>
<div class="t" style="left:581.31px;top:142.85px;font-size:9.70px;line-height:9.70px;letter-spacing:-0.228px;color:#333333;font-weight:400;">-30.33 MHz</div>
<div class="t" style="left:646.41px;top:142.85px;font-size:9.70px;line-height:9.70px;letter-spacing:-0.166px;color:#333333;font-weight:400;">801.6 MHz</div>
<div class="t" style="left:711.51px;top:142.85px;font-size:9.70px;line-height:9.70px;letter-spacing:0.271px;color:#333333;font-weight:400;">35520 °</div>
<div class="t" style="left:428.82px;top:156.82px;font-size:9.70px;line-height:9.70px;color:#333333;font-weight:400;">13</div>
<div class="t" style="left:462.13px;top:156.82px;font-size:9.70px;line-height:9.70px;letter-spacing:-0.051px;color:#333333;font-weight:400;">.63 ns</div>
<div class="t" style="left:516.32px;top:156.82px;font-size:9.70px;line-height:9.70px;letter-spacing:0.111px;color:#333333;font-weight:400;">11.09 us</div>
<div class="t" style="left:581.41px;top:156.82px;font-size:9.70px;line-height:9.70px;letter-spacing:-0.228px;color:#333333;font-weight:400;">34.85 MHz</div>
<div class="t" style="left:646.41px;top:156.82px;font-size:9.70px;line-height:9.70px;letter-spacing:-0.166px;color:#333333;font-weight:400;">806.0 MHz</div>
<div class="t" style="left:711.51px;top:156.82px;font-size:9.70px;line-height:9.70px;letter-spacing:0.271px;color:#333333;font-weight:400;">35450 °</div>
<div class="t" style="left:428.82px;top:170.79px;font-size:9.70px;line-height:9.70px;color:#333333;font-weight:400;">14</div>
<div class="t" style="left:462.61px;top:170.79px;font-size:9.70px;line-height:9.70px;letter-spacing:-0.051px;color:#333333;font-weight:400;">8.5 ns</div>
<div class="t" style="left:516.32px;top:170.79px;font-size:9.70px;line-height:9.70px;letter-spacing:0.111px;color:#333333;font-weight:400;">11.09 us</div>
<div class="t" style="left:581.41px;top:170.79px;font-size:9.70px;line-height:9.70px;letter-spacing:-0.228px;color:#333333;font-weight:400;">35.06 MHz</div>
<div class="t" style="left:646.41px;top:170.79px;font-size:9.70px;line-height:9.70px;letter-spacing:-0.166px;color:#333333;font-weight:400;">801.0 MHz</div>
<div class="t" style="left:711.51px;top:170.79px;font-size:9.70px;line-height:9.70px;letter-spacing:0.271px;color:#333333;font-weight:400;">35480 °</div>
<div class="t" style="left:428.82px;top:184.76px;font-size:9.70px;line-height:9.70px;color:#333333;font-weight:400;">15</div>
<div class="t" style="left:462.71px;top:184.76px;font-size:9.70px;line-height:9.70px;letter-spacing:-0.051px;color:#333333;font-weight:400;">3.8 ns</div>
<div class="t" style="left:516.32px;top:184.76px;font-size:9.70px;line-height:9.70px;letter-spacing:0.111px;color:#333333;font-weight:400;">11.10 us</div>
<div class="t" style="left:581.31px;top:184.76px;font-size:9.70px;line-height:9.70px;letter-spacing:-0.228px;color:#333333;font-weight:400;">-29.84 MHz</div>
<div class="t" style="left:646.31px;top:184.76px;font-size:9.70px;line-height:9.70px;letter-spacing:-0.166px;color:#333333;font-weight:400;">797.6 MHz</div>
<div class="t" style="left:711.51px;top:184.76px;font-size:9.70px;line-height:9.70px;letter-spacing:0.271px;color:#333333;font-weight:400;">35550 °</div>
<div class="t" style="left:428.82px;top:198.73px;font-size:9.70px;line-height:9.70px;color:#333333;font-weight:400;">16</div>
<div class="t" style="left:462.71px;top:198.73px;font-size:9.70px;line-height:9.70px;letter-spacing:-0.051px;color:#333333;font-weight:400;">0.8 ns</div>
<div class="t" style="left:516.32px;top:198.73px;font-size:9.70px;line-height:9.70px;letter-spacing:0.111px;color:#333333;font-weight:400;">11.09 us</div>
<div class="t" style="left:581.41px;top:198.73px;font-size:9.70px;line-height:9.70px;letter-spacing:-0.228px;color:#333333;font-weight:400;">38.59 MHz</div>
<div class="t" style="left:646.41px;top:198.73px;font-size:9.70px;line-height:9.70px;letter-spacing:-0.166px;color:#333333;font-weight:400;">805.0 MHz</div>
<div class="t" style="left:711.51px;top:198.73px;font-size:9.70px;line-height:9.70px;letter-spacing:0.271px;color:#333333;font-weight:400;">35480 °</div>
<div class="t" style="left:428.82px;top:212.70px;font-size:9.70px;line-height:9.70px;color:#333333;font-weight:400;">17</div>
<div class="t" style="left:462.51px;top:212.70px;font-size:9.70px;line-height:9.70px;letter-spacing:-0.051px;color:#333333;font-weight:400;">7.6 ns</div>
<div class="t" style="left:516.32px;top:212.70px;font-size:9.70px;line-height:9.70px;letter-spacing:0.111px;color:#333333;font-weight:400;">11.09 us</div>
<div class="t" style="left:581.22px;top:212.70px;font-size:9.70px;line-height:9.70px;letter-spacing:-0.228px;color:#333333;font-weight:400;">27.20 MHz</div>
<div class="t" style="left:646.31px;top:212.70px;font-size:9.70px;line-height:9.70px;letter-spacing:-0.166px;color:#333333;font-weight:400;">793.7 MHz</div>
<div class="t" style="left:711.51px;top:212.70px;font-size:9.70px;line-height:9.70px;letter-spacing:0.271px;color:#333333;font-weight:400;">35560 °</div>
<div class="t" style="left:428.82px;top:226.67px;font-size:9.70px;line-height:9.70px;color:#333333;font-weight:400;">18</div>
<div class="t" style="left:462.32px;top:226.67px;font-size:9.70px;line-height:9.70px;letter-spacing:-0.051px;color:#333333;font-weight:400;">1.3 ns</div>
<div class="t" style="left:516.61px;top:226.67px;font-size:9.70px;line-height:9.70px;letter-spacing:0.111px;color:#333333;font-weight:400;">-- s</div>
<div class="t" style="left:581.31px;top:226.67px;font-size:9.70px;line-height:9.70px;letter-spacing:-0.228px;color:#333333;font-weight:400;">-30.87 MHz</div>
<div class="t" style="left:646.31px;top:226.67px;font-size:9.70px;line-height:9.70px;letter-spacing:-0.166px;color:#333333;font-weight:400;">797.1 MHz</div>
<div class="t" style="left:711.51px;top:226.67px;font-size:9.70px;line-height:9.70px;letter-spacing:0.271px;color:#333333;font-weight:400;">35490 °</div>
<svg style="left:413px;top:87.5px" width="5" height="8"><path d="M0.3 0.4 L4 3.6 L0.3 6.8Z" fill="#111"/></svg>
<div style="left:774px;top:54px;width:14px;height:184px;background:#f6f5f0"></div>
<div style="left:776px;top:55.6px;width:11.5px;height:11.5px;background:linear-gradient(#dfe6f8,#c4d0f0);border:1px solid #b8c4e8;border-radius:2px;box-sizing:border-box"></div>
<svg style="left:776px;top:55.6px" width="11.5" height="11.5" viewBox="0 0 11.5 11.5"><path d="M3 7 L5.75 4.2 L8.5 7" stroke="#4d6185" stroke-width="1.6" fill="none"/></svg>
<div style="left:776px;top:121px;width:11.5px;height:104px;background:linear-gradient(90deg,#c9d3f3,#bac6ee);border:1px solid #aebce6;border-radius:2px;box-sizing:border-box"></div>
<div style="left:779px;top:170px;width:5.5px;height:1px;background:#eef2fc"></div>
<div style="left:779px;top:172px;width:5.5px;height:1px;background:#eef2fc"></div>
<div style="left:779px;top:174px;width:5.5px;height:1px;background:#eef2fc"></div>
<div style="left:779px;top:176px;width:5.5px;height:1px;background:#eef2fc"></div>
<div style="left:776px;top:226.5px;width:11.5px;height:11.5px;background:linear-gradient(#dfe6f8,#c4d0f0);border:1px solid #b8c4e8;border-radius:2px;box-sizing:border-box"></div>
<svg style="left:776px;top:226.5px" width="11.5" height="11.5" viewBox="0 0 11.5 11.5"><path d="M3 4.5 L5.75 7.3 L8.5 4.5" stroke="#4d6185" stroke-width="1.6" fill="none"/></svg>
<div style="left:408px;top:238.5px;width:366px;height:13.5px;background:#f6f5f0"></div>
<div style="left:774px;top:238.5px;width:14px;height:13.5px;background:#eae7d8"></div>
<div style="left:409px;top:239.8px;width:12px;height:11.8px;background:linear-gradient(#dfe6f8,#c4d0f0);border:1px solid #b8c4e8;border-radius:2px;box-sizing:border-box"></div>
<svg style="left:409px;top:239.8px" width="12" height="11.8" viewBox="0 0 12 11.8"><path d="M7 3 L4.2 5.9 L7 8.8" stroke="#4d6185" stroke-width="1.6" fill="none"/></svg>
<div style="left:529px;top:239.8px;width:231px;height:11.8px;background:linear-gradient(#c9d3f3,#bac6ee);border:1px solid #aebce6;border-radius:2px;box-sizing:border-box"></div>
<div style="left:641px;top:243px;width:1px;height:5.5px;background:#eef2fc"></div>
<div style="left:643px;top:243px;width:1px;height:5.5px;background:#eef2fc"></div>
<div style="left:645px;top:243px;width:1px;height:5.5px;background:#eef2fc"></div>
<div style="left:647px;top:243px;width:1px;height:5.5px;background:#eef2fc"></div>
<div style="left:762px;top:239.8px;width:12px;height:11.8px;background:linear-gradient(#dfe6f8,#c4d0f0);border:1px solid #b8c4e8;border-radius:2px;box-sizing:border-box"></div>
<svg style="left:762px;top:239.8px" width="12" height="11.8" viewBox="0 0 12 11.8"><path d="M5 3 L7.8 5.9 L5 8.8" stroke="#4d6185" stroke-width="1.6" fill="none"/></svg>
<svg style="left:78.90px;top:292.40px" width="7" height="7" viewBox="0 0 7 7"><circle cx="3.5" cy="3.5" r="2.9" fill="#d6d6e6"/><path d="M0.75 4.4 Q3.5 5.0 6.25 4.4 A2.9 2.9 0 0 1 0.75 4.4Z" fill="#4c3e94"/><path d="M5.6 1.6 A2.9 2.9 0 0 1 6.2 4.3" stroke="#9a9ab4" stroke-width="0.7" fill="none"/><circle cx="2.5" cy="2.3" r="1.05" fill="#3a8a44"/><circle cx="2.9" cy="2.6" r="0.55" fill="#c8d040"/></svg>
<div class="t" style="left:90.61px;top:292.00px;font-size:9.69px;line-height:9.69px;letter-spacing:-0.216px;color:#333333;font-weight:400;">995 MHz</div>
<div class="t" style="left:14.02px;top:302.30px;font-size:9.76px;line-height:9.76px;letter-spacing:-0.140px;color:#333333;font-weight:400;">Result:</div>
<div style="left:13.2px;top:313.7px;width:62.5px;height:17px;background:#fff;border:1px solid #7f9db9;box-sizing:border-box"></div>
<div style="left:62.5px;top:315px;width:12px;height:14.5px;background:linear-gradient(#d4def8,#b8c8f0);border:1px solid #c0ccee;border-radius:2px;box-sizing:border-box"></div>
<svg style="left:62.5px;top:315px" width="12" height="14.5"><path d="M3.2 5.8 L6 8.6 L8.8 5.8" stroke="#4d6185" stroke-width="1.7" fill="none"/></svg>
<div class="t" style="left:15.22px;top:317.70px;font-size:9.73px;line-height:9.73px;letter-spacing:-0.176px;color:#333333;font-weight:400;">Freq Dev</div>
<svg style="left:11.40px;top:336.20px" width="7" height="7" viewBox="0 0 7 7"><circle cx="3.5" cy="3.5" r="2.9" fill="#d6d6e6"/><path d="M0.75 4.4 Q3.5 5.0 6.25 4.4 A2.9 2.9 0 0 1 0.75 4.4Z" fill="#4c3e94"/><path d="M5.6 1.6 A2.9 2.9 0 0 1 6.2 4.3" stroke="#9a9ab4" stroke-width="0.7" fill="none"/><circle cx="2.5" cy="2.3" r="1.05" fill="#3a8a44"/><circle cx="2.9" cy="2.6" r="0.55" fill="#c8d040"/></svg>
<div class="t" style="left:26.00px;top:335.90px;font-size:12.54px;line-height:12.54px;letter-spacing:0.355px;color:#181818;font-weight:400;-webkit-text-stroke:0.25px #181818;">Pulse 8</div>
<div class="t" style="left:21.30px;top:353.30px;font-size:12.50px;line-height:12.50px;letter-spacing:0.382px;color:#181818;font-weight:400;-webkit-text-stroke:0.25px #181818;">801.0 MHz</div>
<svg style="left:150px;top:289px" width="240" height="200" viewBox="0 0 240 200"><rect x="0.30" y="0.20" width="239.70" height="199.80" fill="#272425"/><path d="M24.27 0.20V200.00 M0.30 20.18H240.00 M48.24 0.20V200.00 M0.30 40.16H240.00 M72.21 0.20V200.00 M0.30 60.14H240.00 M96.18 0.20V200.00 M0.30 80.12H240.00 M120.15 0.20V200.00 M0.30 100.10H240.00 M144.12 0.20V200.00 M0.30 120.08H240.00 M168.09 0.20V200.00 M0.30 140.06H240.00 M192.06 0.20V200.00 M0.30 160.04H240.00 M216.03 0.20V200.00 M0.30 180.02H240.00" stroke="#858585" stroke-width="1.1" fill="none"/><path d="M23.69999999999999 60.60000000000002H217 M23.69999999999999 140.3H217 M120.19999999999999 64V138" stroke="#4a7cc0" stroke-width="1.05" fill="none"/><path d="M116.69999999999999 68.5 L120.19999999999999 61.5 L123.69999999999999 68.5Z M116.69999999999999 133 L120.19999999999999 140 L123.69999999999999 133Z" stroke="#4a7cc0" stroke-width="0.5" fill="#4a7cc0"/><path d="M0.30 33.88 L0.80 34.59 L1.30 32.74 L1.80 33.31 L2.30 30.24 L2.80 34.69 L3.30 50.26 L3.80 59.88 L4.30 56.04 L4.80 51.25 L5.30 48.79 L5.80 50.53 L6.30 55.91 L6.80 56.78 L7.30 48.57 L7.80 47.98 L8.30 54.34 L8.80 55.16 L9.30 52.43 L9.80 50.13 L10.30 55.41 L10.80 47.15 L11.30 51.22 L11.80 53.45 L12.30 60.43 L12.80 56.02 L13.30 59.37 L13.80 53.65 L14.30 50.29 L14.80 50.46 L15.30 60.45 L15.80 56.87 L16.30 51.30 L16.80 47.31 L17.30 53.98 L17.80 56.44 L18.30 52.88 L18.80 50.60 L18.80 142.98 L18.30 140.59 L17.80 141.95 L17.30 142.08 L16.80 137.54 L16.30 134.54 L15.80 134.47 L15.30 135.28 L14.80 142.77 L14.30 135.92 L13.80 137.54 L13.30 135.32 L12.80 142.54 L12.30 139.99 L11.80 137.75 L11.30 136.01 L10.80 135.69 L10.30 138.46 L9.80 142.57 L9.30 136.65 L8.80 140.84 L8.30 135.99 L7.80 136.08 L7.30 141.38 L6.80 136.81 L6.30 142.73 L5.80 135.85 L5.30 138.54 L4.80 140.65 L4.30 141.17 L3.80 135.78 L3.30 140.14 L2.80 137.79 L2.30 137.04 L1.80 134.31 L1.30 136.04 L0.80 142.33 L0.30 140.01Z" fill="#f4ea62"/><path d="M2.50 47.00V61.00 M6.50 47.00V58.00 M8.80 47.00V67.00 M11.20 47.00V63.00 M14.20 47.00V60.00 M17.20 47.00V67.00" stroke="#272425" stroke-width="0.8" fill="none"/><path d="M2.50 138.00V151.00 M7.20 133.00V151.00 M12.70 117.00V151.00 M13.80 131.00V151.00 M16.50 139.00V151.00" stroke="#272425" stroke-width="0.8" fill="none"/><path d="M4.50 15.60V51.00 M9.50 9.60V51.00 M13.00 31.00V51.00 M16.50 14.00V51.00 M7.00 29.00V51.00 M11.50 23.00V51.00 M18.20 36.00V56.00 M1.50 26.00V41.00 M0.80 131.00V173.00 M4.20 131.00V185.00 M8.40 131.00V192.00 M11.20 131.00V177.00 M15.20 131.00V189.00 M17.80 131.00V167.00" stroke="#f4ea62" stroke-width="1.0" fill="none"/><path d="M18.50 115.00 L20.00 125.00 L22.50 131.00 L26.00 134.50 L26.00 139.00 L22.50 143.00 L20.00 151.00 L18.50 163.00Z" fill="#f4ea62"/><path d="M217.00 67.59 L217.50 63.48 L218.00 62.11 L218.50 66.12 L219.00 64.48 L219.50 59.69 L220.00 62.99 L220.50 60.77 L221.00 40.22 L221.50 38.95 L222.00 34.08 L222.50 29.09 L223.00 37.39 L223.50 39.54 L224.00 57.67 L224.50 32.71 L225.00 57.93 L225.50 35.22 L226.00 39.70 L226.50 53.65 L227.00 53.66 L227.50 41.97 L228.00 30.48 L228.50 43.20 L229.00 40.18 L229.50 56.59 L230.00 34.79 L230.50 39.93 L231.00 55.91 L231.50 29.91 L232.00 41.32 L232.50 53.35 L233.00 52.00 L233.50 30.22 L234.00 30.05 L234.50 30.88 L235.00 56.60 L235.50 36.71 L236.00 51.42 L236.50 55.96 L237.00 39.17 L237.50 37.17 L238.00 57.73 L238.50 47.51 L239.00 36.87 L239.50 50.50 L240.00 38.49 L240.00 158.04 L239.50 157.72 L239.00 156.50 L238.50 155.41 L238.00 156.68 L237.50 158.26 L237.00 156.99 L236.50 154.58 L236.00 154.50 L235.50 155.59 L235.00 159.93 L234.50 159.30 L234.00 159.88 L233.50 155.95 L233.00 157.32 L232.50 154.20 L232.00 154.39 L231.50 155.48 L231.00 158.52 L230.50 155.18 L230.00 154.47 L229.50 158.69 L229.00 156.17 L228.50 155.92 L228.00 155.97 L227.50 136.86 L227.00 138.18 L226.50 138.58 L226.00 137.91 L225.50 138.42 L225.00 133.46 L224.50 139.42 L224.00 135.95 L223.50 135.44 L223.00 134.01 L222.50 135.09 L222.00 139.63 L221.50 139.65 L221.00 135.80 L220.50 133.87 L220.00 132.19 L219.50 139.55 L219.00 137.07 L218.50 139.33 L218.00 138.05 L217.50 132.03 L217.00 134.21Z" fill="#f4ea62"/><path d="M225.00 41.00V79.00 M229.00 41.00V75.00 M234.00 41.00V93.00 M237.00 41.00V61.00 M222.80 56.00V71.00 M231.50 41.00V63.00" stroke="#272425" stroke-width="0.8" fill="none"/><path d="M222.50 132.00V151.00 M231.00 118.50V161.00 M225.50 126.00V151.00 M236.50 141.00V161.00" stroke="#272425" stroke-width="0.8" fill="none"/><path d="M227.30 0.50V51.00 M221.50 22.60V61.00 M233.00 14.40V51.00 M239.50 17.50V51.00 M228.00 33.00V51.00 M236.00 23.00V51.00 M224.00 29.00V56.00 M230.50 27.00V51.00 M221.50 141.00V200.00 M234.00 151.00V200.00 M226.00 141.00V181.00 M230.00 151.00V186.00 M238.00 151.00V176.00 M223.50 141.00V163.00 M236.20 151.00V181.00 M232.00 151.00V169.00 M228.50 141.00V177.00" stroke="#f4ea62" stroke-width="1.0" fill="none"/><path d="M24.00 136.17 L24.60 136.09 L25.20 135.58 L25.80 134.53 L26.40 135.37 L27.00 134.32 L27.60 134.49 L28.20 133.97 L28.80 134.28 L29.41 133.24 L30.01 133.07 L30.61 132.84 L31.21 132.46 L31.81 133.33 L32.41 132.63 L33.01 132.02 L33.61 131.89 L34.21 132.55 L34.81 131.59 L35.41 130.94 L36.01 131.57 L36.61 131.10 L37.21 131.37 L37.81 129.81 L38.41 130.13 L39.02 130.41 L39.62 130.21 L40.22 130.09 L40.82 128.54 L41.42 128.68 L42.02 128.19 L42.62 128.06 L43.22 129.00 L43.82 128.18 L44.42 128.47 L45.02 127.39 L45.62 127.90 L46.22 127.04 L46.82 126.52 L47.42 127.06 L48.02 127.08 L48.63 125.59 L49.23 126.09 L49.83 125.89 L50.43 125.05 L51.03 125.04 L51.63 124.47 L52.23 124.33 L52.83 124.17 L53.43 124.45 L54.03 124.29 L54.63 123.39 L55.23 122.86 L55.83 123.10 L56.43 123.40 L57.03 122.42 L57.63 122.38 L58.24 121.98 L58.84 122.63 L59.44 122.03 L60.04 121.06 L60.64 120.89 L61.24 121.09 L61.84 121.09 L62.44 120.99 L63.04 119.93 L63.64 119.81 L64.24 120.37 L64.84 119.71 L65.44 119.28 L66.04 119.08 L66.64 119.82 L67.24 118.62 L67.85 118.77 L68.45 118.22 L69.05 118.07 L69.65 118.51 L70.25 118.47 L70.85 117.29 L71.45 116.81 L72.05 117.37 L72.65 116.35 L73.25 115.82 L73.85 116.92 L74.45 115.97 L75.05 116.33 L75.65 115.48 L76.25 115.96 L76.85 115.09 L77.46 114.41 L78.06 113.95 L78.66 114.52 L79.26 114.42 L79.86 114.59 L80.46 113.12 L81.06 113.69 L81.66 113.08 L82.26 113.04 L82.86 112.27 L83.46 112.24 L84.06 112.36 L84.66 112.74 L85.26 111.28 L85.86 111.61 L86.46 111.85 L87.07 111.86 L87.67 110.47 L88.27 110.13 L88.87 111.12 L89.47 110.93 L90.07 109.96 L90.67 109.08 L91.27 110.16 L91.87 109.11 L92.47 109.65 L93.07 108.99 L93.67 109.06 L94.27 107.83 L94.87 108.54 L95.47 107.46 L96.07 107.50 L96.67 107.92 L97.28 107.66 L97.88 106.46 L98.48 106.28 L99.08 106.32 L99.68 106.26 L100.28 105.82 L100.88 105.20 L101.48 105.15 L102.08 105.63 L102.68 105.65 L103.28 104.13 L103.88 104.68 L104.48 104.74 L105.08 103.43 L105.68 104.39 L106.28 103.08 L106.89 103.56 L107.49 103.26 L108.09 103.14 L108.69 102.42 L109.29 102.36 L109.89 102.37 L110.49 101.90 L111.09 102.01 L111.69 101.46 L112.29 101.21 L112.89 100.35 L113.49 101.01 L114.09 100.58 L114.69 99.97 L115.29 100.52 L115.89 100.31 L116.50 99.60 L117.10 98.94 L117.70 99.15 L118.30 98.37 L118.90 98.16 L119.50 98.38 L120.10 97.64 L120.70 97.93 L121.30 97.80 L121.90 96.86 L122.50 97.52 L123.10 96.45 L123.70 97.19 L124.30 97.03 L124.90 96.39 L125.50 95.47 L126.11 95.91 L126.71 95.49 L127.31 96.11 L127.91 94.66 L128.51 95.50 L129.11 95.48 L129.71 94.85 L130.31 94.74 L130.91 93.57 L131.51 94.52 L132.11 93.55 L132.71 94.01 L133.31 93.71 L133.91 92.35 L134.51 93.05 L135.11 93.03 L135.72 91.50 L136.32 91.69 L136.92 92.07 L137.52 90.93 L138.12 91.81 L138.72 90.64 L139.32 91.22 L139.92 89.97 L140.52 90.28 L141.12 90.67 L141.72 89.37 L142.32 89.21 L142.92 89.34 L143.52 88.83 L144.12 88.17 L144.72 88.15 L145.33 87.89 L145.93 88.82 L146.53 88.20 L147.13 88.28 L147.73 86.96 L148.33 87.65 L148.93 86.41 L149.53 86.80 L150.13 86.72 L150.73 86.07 L151.33 86.61 L151.93 85.90 L152.53 85.70 L153.13 85.92 L153.73 84.52 L154.33 85.61 L154.93 84.84 L155.54 84.25 L156.14 84.62 L156.74 83.58 L157.34 84.44 L157.94 83.58 L158.54 83.02 L159.14 83.40 L159.74 82.68 L160.34 82.04 L160.94 82.66 L161.54 81.38 L162.14 82.30 L162.74 81.22 L163.34 81.56 L163.94 81.85 L164.54 81.01 L165.15 80.90 L165.75 80.14 L166.35 79.43 L166.95 79.25 L167.55 79.19 L168.15 79.65 L168.75 79.14 L169.35 79.03 L169.95 79.37 L170.55 77.99 L171.15 77.90 L171.75 78.30 L172.35 77.12 L172.95 76.85 L173.55 77.15 L174.15 76.54 L174.76 76.68 L175.36 76.25 L175.96 76.55 L176.56 76.33 L177.16 75.51 L177.76 75.91 L178.36 75.45 L178.96 74.71 L179.56 75.67 L180.16 74.40 L180.76 74.02 L181.36 73.71 L181.96 74.29 L182.56 74.40 L183.16 74.03 L183.76 73.23 L184.37 72.79 L184.97 72.17 L185.57 72.89 L186.17 72.53 L186.77 71.98 L187.37 72.19 L187.97 71.65 L188.57 72.15 L189.17 71.61 L189.77 70.65 L190.37 71.40 L190.97 69.88 L191.57 70.37 L192.17 69.95 L192.77 69.46 L193.37 68.96 L193.98 69.81 L194.58 68.42 L195.18 68.99 L195.78 69.34 L196.38 67.91 L196.98 67.76 L197.58 68.14 L198.18 67.75 L198.78 67.72 L199.38 67.74 L199.98 66.55 L200.58 66.52 L201.18 66.27 L201.78 65.66 L202.38 66.69 L202.98 66.29 L203.59 65.96 L204.19 64.66 L204.79 65.68 L205.39 65.30 L205.99 64.64 L206.59 64.82 L207.19 64.15 L207.79 63.58 L208.39 63.16 L208.99 63.12 L209.59 62.59 L210.19 62.80 L210.79 63.19 L211.39 62.87 L211.99 62.86 L212.59 62.43 L213.20 61.53 L213.80 61.72 L214.40 61.31 L215.00 61.61 L215.60 60.97 L216.20 60.35 L216.80 60.68 L217.40 60.93 L218.00 59.58" stroke="#f4ea62" stroke-width="2.2" fill="none" stroke-linejoin="round" /></svg>
<svg style="left:78.40px;top:407.80px" width="7" height="7" viewBox="0 0 7 7"><circle cx="3.5" cy="3.5" r="2.9" fill="#d6d6e6"/><path d="M0.75 4.4 Q3.5 5.0 6.25 4.4 A2.9 2.9 0 0 1 0.75 4.4Z" fill="#4c3e94"/><path d="M5.6 1.6 A2.9 2.9 0 0 1 6.2 4.3" stroke="#9a9ab4" stroke-width="0.7" fill="none"/><circle cx="2.5" cy="2.3" r="1.05" fill="#3a8a44"/><circle cx="2.9" cy="2.6" r="0.55" fill="#c8d040"/></svg>
<div class="t" style="left:87.62px;top:406.50px;font-size:9.80px;line-height:9.80px;letter-spacing:-0.118px;color:#333333;font-weight:400;">Position:</div>
<div class="t" style="left:86.41px;top:418.80px;font-size:9.73px;line-height:9.73px;letter-spacing:-0.175px;color:#333333;font-weight:400;">-6.65 MHz</div>
<div class="t" style="left:85.61px;top:477.00px;font-size:9.70px;line-height:9.70px;letter-spacing:-0.179px;color:#333333;font-weight:400;">-1.01 GHz</div>
<div style="left:87.2px;top:495.2px;width:54.3px;height:15px;border:1px solid #3c5f94;border-radius:3px;box-sizing:border-box;background:linear-gradient(#ffffff,#f4f3ee 70%,#dcdad0)"></div>
<div class="t" style="left:93.20px;top:499.50px;font-size:9.34px;line-height:9.34px;letter-spacing:0.015px;color:#333333;font-weight:400;">Autoscale</div>
<svg style="left:146.90px;top:499.90px" width="7" height="7" viewBox="0 0 7 7"><circle cx="3.5" cy="3.5" r="2.9" fill="#d6d6e6"/><path d="M0.75 4.4 Q3.5 5.0 6.25 4.4 A2.9 2.9 0 0 1 0.75 4.4Z" fill="#4c3e94"/><path d="M5.6 1.6 A2.9 2.9 0 0 1 6.2 4.3" stroke="#9a9ab4" stroke-width="0.7" fill="none"/><circle cx="2.5" cy="2.3" r="1.05" fill="#3a8a44"/><circle cx="2.9" cy="2.6" r="0.55" fill="#c8d040"/></svg>
<div class="t" style="left:159.80px;top:499.20px;font-size:9.97px;line-height:9.97px;letter-spacing:-0.084px;color:#333333;font-weight:400;">80.7 us</div>
<svg style="left:306.40px;top:500.20px" width="7" height="7" viewBox="0 0 7 7"><circle cx="3.5" cy="3.5" r="2.9" fill="#d6d6e6"/><path d="M0.75 4.4 Q3.5 5.0 6.25 4.4 A2.9 2.9 0 0 1 0.75 4.4Z" fill="#4c3e94"/><path d="M5.6 1.6 A2.9 2.9 0 0 1 6.2 4.3" stroke="#9a9ab4" stroke-width="0.7" fill="none"/><circle cx="2.5" cy="2.3" r="1.05" fill="#3a8a44"/><circle cx="2.9" cy="2.6" r="0.55" fill="#c8d040"/></svg>
<div class="t" style="left:318.91px;top:499.70px;font-size:9.79px;line-height:9.79px;letter-spacing:-0.128px;color:#333333;font-weight:400;">Scale: 1.30 us</div>
<div class="t" style="left:568.83px;top:287.60px;font-size:9.68px;line-height:9.68px;letter-spacing:-0.204px;color:#333333;font-weight:400;">Normal</div>
<div style="left:757px;top:284.3px;width:29.3px;height:16.3px;border:1px solid #3c5f94;border-radius:3px;box-sizing:border-box;background:linear-gradient(#ffffff,#f4f3ee 70%,#dcdad0)"></div>
<div class="t" style="left:760.56px;top:289.00px;font-size:8.87px;line-height:8.87px;letter-spacing:-0.159px;color:#333333;font-weight:400;">Clear</div>
<svg style="left:477px;top:303px" width="311" height="174" viewBox="0 0 311 174"><rect x="0.30" y="0.00" width="310.00" height="174.00" fill="#272425"/><path d="M31.30 0.00V174.00 M0.30 17.55H310.30 M62.30 0.00V174.00 M0.30 35.10H310.30 M93.30 0.00V174.00 M0.30 52.65H310.30 M124.30 0.00V174.00 M0.30 70.20H310.30 M155.30 0.00V174.00 M0.30 87.75H310.30 M186.30 0.00V174.00 M0.30 105.30H310.30 M217.30 0.00V174.00 M0.30 122.85H310.30 M248.30 0.00V174.00 M0.30 140.40H310.30 M279.30 0.00V174.00 M0.30 157.95H310.30" stroke="#858585" stroke-width="1.1" fill="none"/><path d="M0.20 19.06 L0.96 16.87 L1.72 16.90 L2.48 16.39 L3.24 16.95 L4.00 16.89 L4.87 16.09 L5.73 14.85 L6.60 15.56 L7.47 14.06 L8.33 13.48 L9.20 14.42 L9.96 14.24 L10.72 14.75 L11.48 15.07 L12.24 16.08 L13.00 15.44 L13.79 16.31 L14.57 16.15 L15.36 16.60 L16.14 15.89 L16.93 16.59 L17.71 16.41 L18.50 16.02 L19.25 15.09 L20.00 15.18 L20.75 13.36 L21.50 14.29 L22.25 12.02 L23.00 11.05 L23.81 10.70 L24.63 11.83 L25.44 10.15 L26.26 9.23 L27.07 8.49 L27.89 8.00 L28.70 8.79 L29.52 9.19 L30.35 9.84 L31.18 10.45 L32.00 9.63 L32.80 11.08 L33.60 11.03 L34.40 12.34 L35.20 12.74 L36.13 11.85 L37.07 9.17 L38.00 9.74 L38.83 10.13 L39.67 10.49 L40.50 9.90 L41.50 13.40 L42.50 16.37 L43.50 19.30 L44.50 22.19 L45.50 25.04 L46.50 27.86 L47.50 30.65 L48.50 33.39 L49.50 36.11 L50.50 38.78 L51.50 41.43 L52.50 44.03 L53.50 46.61 L54.50 49.15 L55.50 51.65 L56.50 54.13 L57.50 56.57 L58.50 58.97 L59.50 61.35 L60.50 63.69 L61.50 66.00 L62.50 68.27 L63.50 70.52 L64.50 72.73 L65.50 74.91 L66.50 77.07 L67.50 79.19 L68.50 81.28 L69.50 83.34 L70.50 85.37 L71.50 87.37 L72.50 89.34 L73.50 91.28 L74.50 93.19 L75.50 95.07 L76.50 96.93 L77.50 98.75 L78.50 100.55 L79.50 102.31 L80.50 104.06 L81.50 105.77 L82.50 107.45 L83.50 109.11 L84.50 110.74 L85.50 112.34 L86.50 113.92 L87.50 115.47 L88.50 116.99 L89.50 118.49 L90.50 119.96 L91.50 121.40 L92.50 122.82 L93.50 124.21 L94.50 125.58 L95.50 126.92 L96.50 128.24 L97.50 129.53 L98.50 130.79 L99.50 132.04 L100.50 133.25 L101.50 134.45 L102.50 135.61 L103.50 136.76 L104.50 137.88 L105.50 138.97 L106.50 140.04 L107.50 141.09 L108.50 142.12 L109.50 143.12 L110.50 144.10 L111.50 145.05 L112.50 145.98 L113.50 146.89 L114.50 147.78 L115.50 148.64 L116.50 149.48 L117.50 150.30 L118.50 151.09 L119.50 151.87 L120.50 152.62 L121.50 153.35 L122.50 154.05 L123.50 154.74 L124.50 155.40 L125.50 156.04 L126.50 156.66 L127.50 157.26 L128.50 157.83 L129.50 158.39 L130.50 158.92 L131.50 159.43 L132.50 159.92 L133.50 160.39 L134.50 160.84 L135.50 161.26 L136.50 161.67 L137.50 162.05 L138.50 162.41 L139.50 162.76 L140.50 163.08 L141.50 163.38 L142.50 163.66 L143.50 163.91 L144.50 164.15 L145.50 164.37 L146.50 164.56 L147.50 164.74 L148.50 164.89 L149.50 165.03 L150.50 165.14 L151.50 165.24 L152.50 165.31 L153.50 165.36 L154.50 165.39 L155.50 165.40 L156.50 165.39 L157.50 165.36 L158.50 165.31 L159.50 165.24 L160.50 165.14 L161.50 165.03 L162.50 164.89 L163.50 164.74 L164.50 164.56 L165.50 164.37 L166.50 164.15 L167.50 163.91 L168.50 163.66 L169.50 163.38 L170.50 163.08 L171.50 162.76 L172.50 162.41 L173.50 162.05 L174.50 161.67 L175.50 161.26 L176.50 160.84 L177.50 160.39 L178.50 159.92 L179.50 159.43 L180.50 158.92 L181.50 158.39 L182.50 157.83 L183.50 157.26 L184.50 156.66 L185.50 156.04 L186.50 155.40 L187.50 154.74 L188.50 154.05 L189.50 153.35 L190.50 152.62 L191.50 151.87 L192.50 151.09 L193.50 150.30 L194.50 149.48 L195.50 148.64 L196.50 147.78 L197.50 146.89 L198.50 145.98 L199.50 145.05 L200.50 144.10 L201.50 143.12 L202.50 142.12 L203.50 141.09 L204.50 140.04 L205.50 138.97 L206.50 137.88 L207.50 136.76 L208.50 135.61 L209.50 134.45 L210.50 133.25 L211.50 132.04 L212.50 130.79 L213.50 129.53 L214.50 128.24 L215.50 126.92 L216.50 125.58 L217.50 124.21 L218.50 122.82 L219.50 121.40 L220.50 119.96 L221.50 118.49 L222.50 116.99 L223.50 115.47 L224.50 113.92 L225.50 112.34 L226.50 110.74 L227.50 109.11 L228.50 107.45 L229.50 105.77 L230.50 104.06 L231.50 102.31 L232.50 100.55 L233.50 98.75 L234.50 96.93 L235.50 95.07 L236.50 93.19 L237.50 91.28 L238.50 89.34 L239.50 87.37 L240.50 85.37 L241.50 83.34 L242.50 81.28 L243.50 79.19 L244.50 77.07 L245.50 74.91 L246.50 72.73 L247.50 70.52 L248.50 68.27 L249.50 66.00 L250.50 63.69 L251.50 61.35 L252.50 58.97 L253.50 56.57 L254.50 54.13 L255.50 51.65 L256.50 49.15 L257.50 46.61 L258.50 44.03 L259.50 41.43 L260.50 38.78 L261.50 36.11 L262.50 33.39 L263.50 30.65 L264.50 27.86 L265.50 25.04 L266.50 22.19 L267.50 19.30 L268.50 16.37 L269.50 13.40 L270.50 10.40 L271.50 7.36 L272.50 4.28 L273.50 1.17 L274.00 3.99 L274.80 3.60 L275.60 2.87 L276.40 2.16 L277.20 3.73 L278.00 3.76 L278.80 3.54 L279.60 3.99 L280.38 3.05 L281.17 1.85 L281.95 0.93 L282.73 0.34 L283.52 0.95 L284.30 -0.63 L285.20 0.27 L286.10 1.16 L287.00 1.14 L287.74 1.84 L288.48 2.17 L289.22 3.23 L289.96 2.88 L290.70 3.08 L291.48 4.56 L292.25 4.06 L293.02 5.01 L293.80 4.91 L294.53 3.29 L295.27 3.41 L296.00 2.89 L296.85 3.72 L297.70 3.17 L298.55 4.04 L299.40 3.97 L300.20 0.94 L301.00 -0.35 L302.00 -4.74 L303.00 -7.00" stroke="#f4ea62" stroke-width="1.15" fill="none" stroke-linejoin="round" /></svg>
<svg style="left:405.90px;top:304.40px" width="7" height="7" viewBox="0 0 7 7"><circle cx="3.5" cy="3.5" r="2.9" fill="#d6d6e6"/><path d="M0.75 4.4 Q3.5 5.0 6.25 4.4 A2.9 2.9 0 0 1 0.75 4.4Z" fill="#4c3e94"/><path d="M5.6 1.6 A2.9 2.9 0 0 1 6.2 4.3" stroke="#9a9ab4" stroke-width="0.7" fill="none"/><circle cx="2.5" cy="2.3" r="1.05" fill="#3a8a44"/><circle cx="2.9" cy="2.6" r="0.55" fill="#c8d040"/></svg>
<div class="t" style="left:418.29px;top:304.40px;font-size:10.21px;line-height:10.21px;letter-spacing:0.005px;color:#333333;font-weight:400;">1.66 M°</div>
<svg style="left:405.40px;top:383.20px" width="7" height="7" viewBox="0 0 7 7"><circle cx="3.5" cy="3.5" r="2.9" fill="#d6d6e6"/><path d="M0.75 4.4 Q3.5 5.0 6.25 4.4 A2.9 2.9 0 0 1 0.75 4.4Z" fill="#4c3e94"/><path d="M5.6 1.6 A2.9 2.9 0 0 1 6.2 4.3" stroke="#9a9ab4" stroke-width="0.7" fill="none"/><circle cx="2.5" cy="2.3" r="1.05" fill="#3a8a44"/><circle cx="2.9" cy="2.6" r="0.55" fill="#c8d040"/></svg>
<div class="t" style="left:414.62px;top:382.70px;font-size:9.80px;line-height:9.80px;letter-spacing:-0.130px;color:#333333;font-weight:400;">Position:</div>
<div class="t" style="left:413.99px;top:395.00px;font-size:10.08px;line-height:10.08px;letter-spacing:-0.040px;color:#333333;font-weight:400;">1.64 M°</div>
<div class="t" style="left:406.89px;top:463.00px;font-size:10.10px;line-height:10.10px;letter-spacing:-0.034px;color:#333333;font-weight:400;">1.62 M°</div>
<div style="left:406.6px;top:481px;width:54px;height:15px;border:1px solid #3c5f94;border-radius:3px;box-sizing:border-box;background:linear-gradient(#ffffff,#f4f3ee 70%,#dcdad0)"></div>
<div class="t" style="left:413.00px;top:485.40px;font-size:9.31px;line-height:9.31px;letter-spacing:0.006px;color:#333333;font-weight:400;">Autoscale</div>
<svg style="left:486.40px;top:487.40px" width="7" height="7" viewBox="0 0 7 7"><circle cx="3.5" cy="3.5" r="2.9" fill="#d6d6e6"/><path d="M0.75 4.4 Q3.5 5.0 6.25 4.4 A2.9 2.9 0 0 1 0.75 4.4Z" fill="#4c3e94"/><path d="M5.6 1.6 A2.9 2.9 0 0 1 6.2 4.3" stroke="#9a9ab4" stroke-width="0.7" fill="none"/><circle cx="2.5" cy="2.3" r="1.05" fill="#3a8a44"/><circle cx="2.9" cy="2.6" r="0.55" fill="#c8d040"/></svg>
<div class="t" style="left:497.91px;top:486.50px;font-size:9.89px;line-height:9.89px;letter-spacing:-0.091px;color:#333333;font-weight:400;">Position: 91.695 us</div>
<svg style="left:684.90px;top:486.90px" width="7" height="7" viewBox="0 0 7 7"><circle cx="3.5" cy="3.5" r="2.9" fill="#d6d6e6"/><path d="M0.75 4.4 Q3.5 5.0 6.25 4.4 A2.9 2.9 0 0 1 0.75 4.4Z" fill="#4c3e94"/><path d="M5.6 1.6 A2.9 2.9 0 0 1 6.2 4.3" stroke="#9a9ab4" stroke-width="0.7" fill="none"/><circle cx="2.5" cy="2.3" r="1.05" fill="#3a8a44"/><circle cx="2.9" cy="2.6" r="0.55" fill="#c8d040"/></svg>
<div class="t" style="left:697.11px;top:486.00px;font-size:9.81px;line-height:9.81px;letter-spacing:-0.124px;color:#333333;font-weight:400;">Scale: 1.459 us</div>
<div class="t" style="left:406.33px;top:502.00px;font-size:8.40px;line-height:8.40px;color:#333333;font-weight:400;">Max:</div>
<div class="t" style="left:431.34px;top:502.00px;font-size:8.51px;line-height:8.51px;letter-spacing:0.083px;color:#333333;font-weight:400;">3499000 °</div>
<div class="t" style="left:498.10px;top:501.80px;font-size:8.60px;line-height:8.60px;color:#333333;font-weight:400;">@</div>
<div class="t" style="left:511.77px;top:501.80px;font-size:8.53px;line-height:8.53px;letter-spacing:0.080px;color:#333333;font-weight:400;">200.1 us</div>
<div class="t" style="left:564.71px;top:501.80px;font-size:8.64px;line-height:8.64px;letter-spacing:0.109px;color:#333333;font-weight:400;">Min: 0.0000 °</div>
<div class="t" style="left:649.40px;top:501.80px;font-size:8.52px;line-height:8.52px;letter-spacing:0.083px;color:#333333;font-weight:400;">@ 100.8 ns</div>
<div style="left:3.5px;top:516px;width:794px;height:1px;background:#f4f2ea"></div>
<div style="left:3.5px;top:517px;width:794px;height:1px;background:#aaa89c"></div>
<div style="left:3.5px;top:518px;width:794px;height:15.5px;background:#eae7d8"></div>
<div style="left:78.5px;top:519.5px;width:1px;height:13px;background:#cdcabb"></div>
<div style="left:79.5px;top:519.5px;width:1px;height:13px;background:#fbfaf2"></div>
<div style="left:299.5px;top:519.5px;width:1px;height:13px;background:#cdcabb"></div>
<div style="left:300.5px;top:519.5px;width:1px;height:13px;background:#fbfaf2"></div>
<div style="left:350.5px;top:519.5px;width:1px;height:13px;background:#cdcabb"></div>
<div style="left:351.5px;top:519.5px;width:1px;height:13px;background:#fbfaf2"></div>
<div style="left:425.5px;top:519.5px;width:1px;height:13px;background:#cdcabb"></div>
<div style="left:426.5px;top:519.5px;width:1px;height:13px;background:#fbfaf2"></div>
<div style="left:580.5px;top:519.5px;width:1px;height:13px;background:#cdcabb"></div>
<div style="left:581.5px;top:519.5px;width:1px;height:13px;background:#fbfaf2"></div>
<div class="t" style="left:4.40px;top:522.20px;font-size:10.03px;line-height:10.03px;letter-spacing:-0.067px;color:#333333;font-weight:400;">Stopped</div>
<div class="t" style="left:83.20px;top:522.20px;font-size:9.91px;line-height:9.91px;letter-spacing:-0.092px;color:#333333;font-weight:400;">Acq BW: 2.20 GHz, Acq Length: 200.184 us</div>
<div class="t" style="left:302.97px;top:522.20px;font-size:9.69px;line-height:9.69px;letter-spacing:-0.177px;color:#333333;font-weight:400;">Real Time</div>
<div class="t" style="left:429.11px;top:522.20px;font-size:9.72px;line-height:9.72px;letter-spacing:-0.161px;color:#333333;font-weight:400;">Scope sample rate 50.000 GHz</div>
</div>
</body></html>
